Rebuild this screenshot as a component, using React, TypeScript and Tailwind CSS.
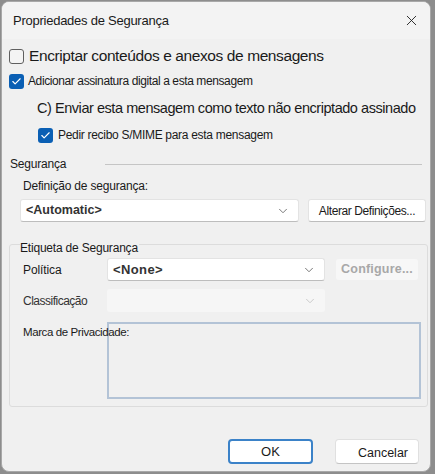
import { ChevronDown, X, Check } from "lucide-react"

const font = { fontFamily: '"Liberation Sans", Arial, sans-serif' }

function Box({ checked }: { checked?: boolean }) {
  return checked ? (
    <span className="flex h-[15px] w-[15px] shrink-0 items-center justify-center rounded-[3px] bg-[#0a5fb4]">
      <Check className="h-[11px] w-[11px] text-white" strokeWidth={2.5} />
    </span>
  ) : (
    <span className="h-[15px] w-[15px] shrink-0 rounded-[3px] border border-[#5f5f5f] bg-[#f4f4f4]" />
  )
}

function Select({ value, disabled, w, text }: { value?: string; disabled?: boolean; w: string; text?: string }) {
  return (
    <div
      className={`flex h-[23px] shrink-0 items-center justify-between rounded-[3px] pl-[5px] pr-[8px] ${w} ${
        disabled
          ? "bg-[#f6f6f6]"
          : "border border-[#e3e3e3] border-b-[#bdbdbd] bg-white"
      }`}
    >
      <span className={`whitespace-nowrap font-bold text-[#333] ${text}`}>{value}</span>
      <ChevronDown
        className={`h-[14px] w-[14px] ${disabled ? "text-[#c4c4c4]" : "text-[#666]"}`}
        strokeWidth={1.5}
      />
    </div>
  )
}

export default function App() {
  return (
    <div className="h-[474px] w-[435px] whitespace-nowrap bg-[#8d8d8d] pl-[1px] pt-[1px]" style={font}>
      <div className="flex h-[471px] w-[430px] flex-col overflow-hidden rounded-[8px] border border-[#a8a8a8] bg-[#f0f0f0] text-[#1a1a1a]">
        <div className="flex h-[37px] shrink-0 items-center justify-between bg-[#f3f3f3] pl-[11px] pr-[10px]">
          <span className="text-[13px] tracking-[-0.25px]">Propriedades de Segurança</span>
          <X className="h-[17px] w-[17px] text-[#222]" strokeWidth={1.3} />
        </div>

        <div className="flex flex-col pl-[7px] pr-[4px]">
          <label className="mt-[9px] flex h-[16px] items-center gap-[5px]">
            <Box />
            <span className="text-[15.5px] tracking-[-0.4px]">Encriptar conteúdos e anexos de mensagens</span>
          </label>

          <label className="mt-[9px] flex h-[16px] items-center gap-[4px]">
            <Box checked />
            <span className="text-[12px] tracking-[-0.4px]">Adicionar assinatura digital a esta mensagem</span>
          </label>

          <div className="mt-[12px] flex h-[16px] items-center pl-[28px]">
            <span className="text-[14.5px] tracking-[-0.45px]">C) Enviar esta mensagem como texto não encriptado assinado</span>
          </div>

          <label className="mt-[10px] flex h-[16px] items-center gap-[5px] pl-[29px]">
            <Box checked />
            <span className="text-[12px] tracking-[-0.3px]">Pedir recibo S/MIME para esta mensagem</span>
          </label>

          <div className="mt-[13px] flex h-[16px] items-center gap-[39px] pl-[1px]">
            <span className="text-[12px] tracking-[-0.2px]">Segurança</span>
            <div className="mr-[4px] h-[1px] flex-1 bg-[#c5c5c5]" />
          </div>

          <div className="mt-[6px] flex h-[16px] items-center pl-[14px]">
            <span className="text-[12px] tracking-[-0.2px]">Definição de segurança:</span>
          </div>

          <div className="mt-[5px] flex items-center gap-[9px] pl-[11px]">
            <Select value="<Automatic>" w="w-[279px]" text="text-[12.5px]" />
            <div className="flex h-[23px] w-[118px] items-center justify-center rounded-[3px] border border-[#e3e3e3] border-b-[#bdbdbd] bg-white">
              <span className="text-[12px] tracking-[-0.4px]">Alterar Definições...</span>
            </div>
          </div>

          <div className="mt-[22px] h-[163px] w-[419px] rounded-[3px] border border-[#dcdcdc] pl-[13px]">
            <span className="-ml-[3px] -mt-[5px] block w-fit bg-[#f0f0f0] pr-[1px] text-[12px] leading-[16px] tracking-[-0.2px]">
              Etiqueta de Segurança
            </span>
            <div className="mt-[2px] flex items-center">
              <span className="w-[84px] shrink-0 text-[12px] tracking-[-0.1px]">Política</span>
              <Select value="<None>" w="w-[218px]" text="text-[13px] tracking-[0.4px]" />
              <div className="ml-[11px] flex h-[21px] w-[82px] shrink-0 items-center justify-center rounded-[3px] bg-[#f7f7f7]">
                <span className="text-[12.5px] font-bold tracking-[0.2px] text-[#a8a8a8]">Configure...</span>
              </div>
            </div>
            <div className="mt-[8px] flex items-center">
              <span className="w-[84px] shrink-0 text-[12px] tracking-[-0.5px] text-[#333]">Classificação</span>
              <Select disabled w="w-[218px]" />
            </div>
            <div className="mt-[10px] flex">
              <span className="relative z-10 -mr-[110px] mt-[2px] w-[110px] shrink-0 text-[11.5px] tracking-[-0.4px]">
                Marca de Privacidade:
              </span>
              <div className="ml-[84px] h-[77px] w-[314px] shrink-0 border-2 border-[#b3c3d6] bg-[#f0f0f0]" />
            </div>
          </div>

          <div className="mt-[32px] flex justify-end gap-[22px] pr-[7px]">
            <div className="flex h-[25px] w-[85px] items-center justify-center rounded-[4px] border-2 border-[#3b82c8] bg-white">
              <span className="text-[13px]">OK</span>
            </div>
            <div className="flex h-[25px] w-[84px] items-center justify-center rounded-[4px] border border-[#e0e0e0] border-b-[#c4c4c4] bg-white pl-[12px] pt-[4px]">
              <span className="text-[12.5px]">Cancelar</span>
            </div>
          </div>
        </div>
      </div>
    </div>
  )
}
